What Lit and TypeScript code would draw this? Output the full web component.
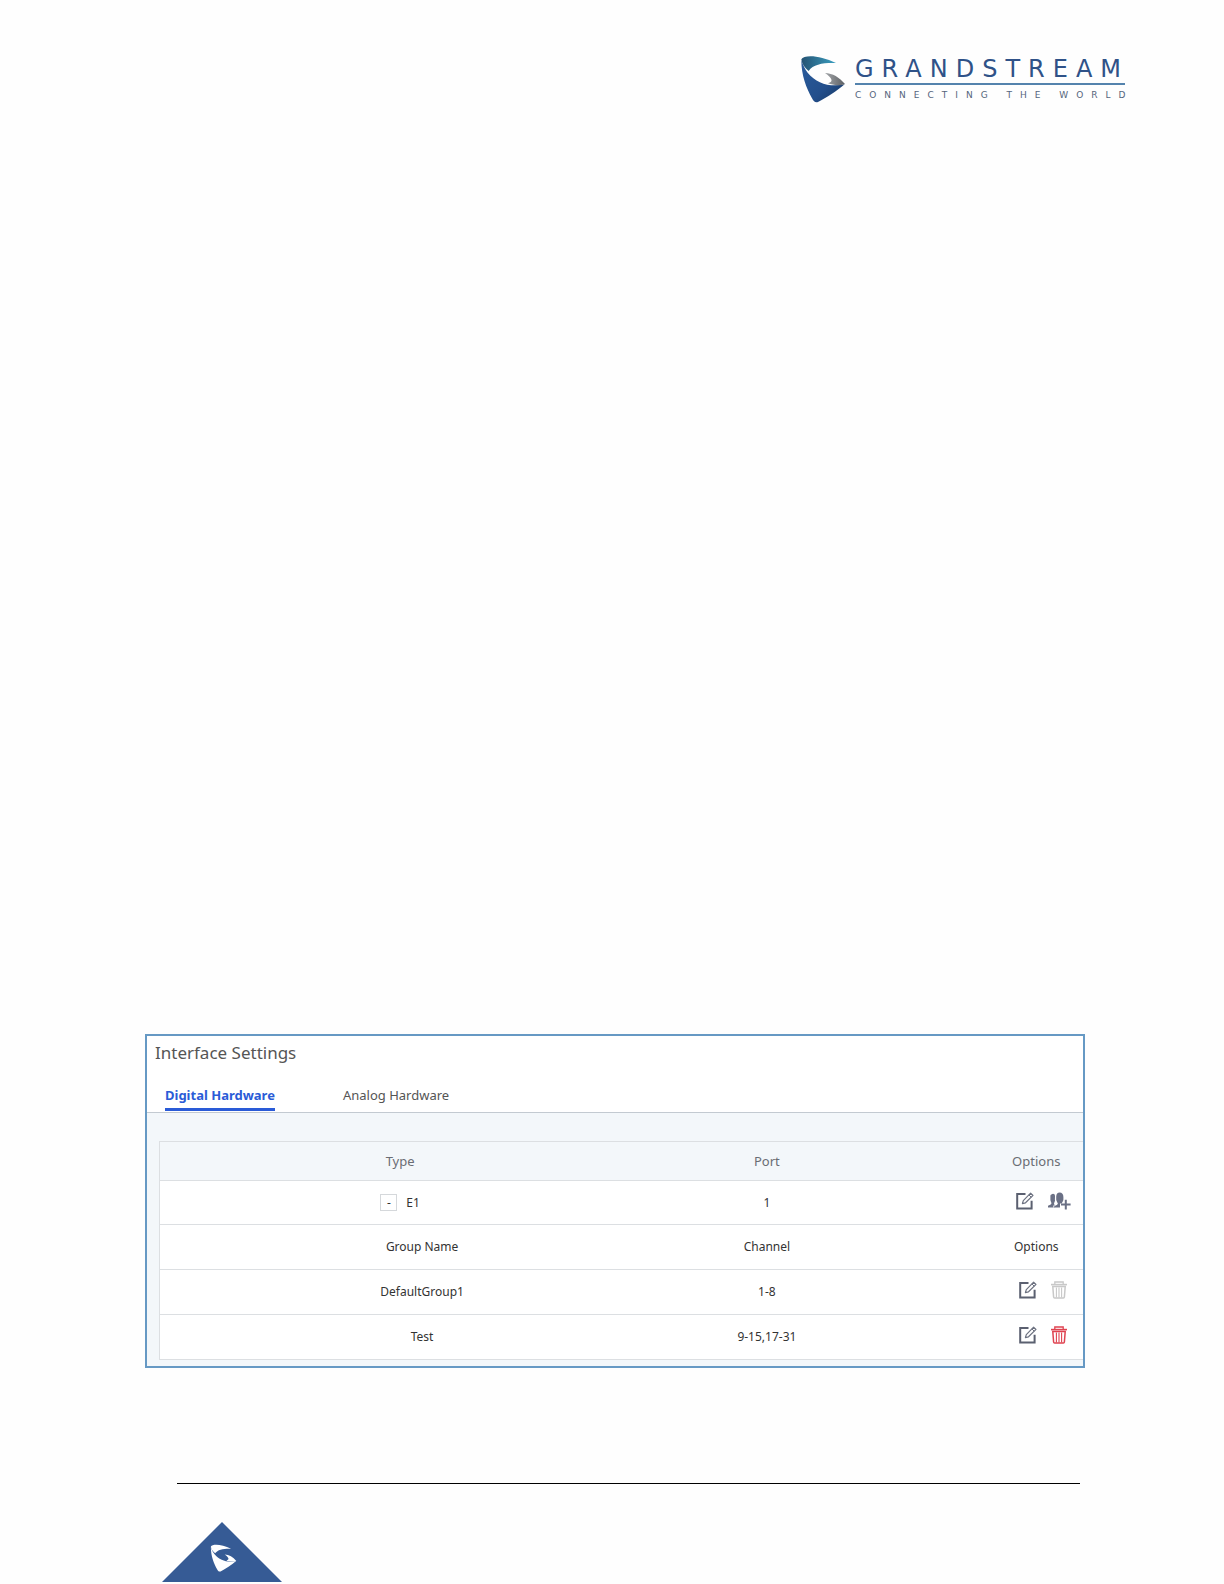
import { LitElement, html, css, svg } from "lit";
import { customElement, state } from "lit/decorators.js";

const shield = (top: string, body: string, tip: string) => svg`
  <path fill=${body} d="M34 43 C39 60 45 70 53 81 C80 114 120 125 164 116 C140 136 110 156 84 169 C76 172 71 167 66 158 C49 126 34 90 34 43Z"/>
  <path fill=${top} d="M34 41 C42 26 90 28 138 52 C100 51 70 55 56 76 C44 66 36 56 34 41Z"/>
  <path fill=${tip} d="M105 82 C128 83 148 95 165 115 C150 121 128 119 114 113 C132 108 126 97 105 82Z"/>`;

const editIcon = html`<svg class="icon" viewBox="0 0 18 18" width="18" height="18" aria-hidden="true">
  <path d="M9.5 2H1.2V16.6H15.6V8.8" fill="none" stroke="#5b6070" stroke-width="2"/>
  <path d="M6.4 11.6L7.3 8.6L14.6 1.2L17 3.4L9.5 10.8Z" fill="#fff" stroke="#6d7281" stroke-width="1.2" stroke-linejoin="round"/>
  <path d="M12.9 2.9L15.2 5.2" stroke="#6d7281" stroke-width="1"/>
</svg>`;

const groupIcon = html`<svg class="icon" viewBox="0 0 23 18" width="23" height="18" aria-hidden="true">
  <path fill="#6a7085" d="M3.4 2.4C5 1.2 7 1.8 7 4V8.5C6.8 10 6 10.8 6 12L7 13V15.4H0V13.8C1.5 13 3.2 13 3.4 11.6C3.6 10.6 2.6 9.6 2.4 8V4C2.4 3 2.8 2.6 3.4 2.4Z"/>
  <path fill="#6a7085" d="M8.2 4.6C8.3 2 9.6 .6 11.6 .6C14 .6 15.4 2.2 15.4 5V7.4C15.4 9.2 13.8 10.2 13.8 11.6H12V15.4H6.4V14C8.2 13.2 9.8 13 9.8 11.6C9.8 10.4 8.2 9.4 8.2 7.4Z"/>
  <path d="M7.6 2L7.4 8L8.8 11.4L5.8 13.6V15.6" stroke="#fff" stroke-width=".9" fill="none"/>
  <path d="M17.8 7.8V17.4M13 12.6H22.6" stroke="#6a7085" stroke-width="2"/>
</svg>`;

const trashIcon = html`<svg class="icon" viewBox="0 0 16 18" width="16" height="18" aria-hidden="true">
  <g fill="none" stroke="currentColor">
    <path d="M0 3.6H16" stroke-width="1.6"/>
    <path d="M3.8 3V1H12.2V3" stroke-width="1.3"/>
    <path d="M1.8 5.6L2.6 16C2.7 16.8 3 17 3.6 17H12.4C13 17 13.3 16.8 13.4 16L14.2 5.6Z" stroke-width="1.5"/>
    <path d="M5.4 6.4V16.4M8 6.4V16.4M10.6 6.4V16.4" stroke-width="1.1"/>
  </g>
</svg>`;

interface Group { name: string; channel: string; removable: boolean }

@customElement("app-root")
export class AppRoot extends LitElement {
  @state() private tab = "Digital Hardware";
  @state() private open = true;

  private groups: Group[] = [
    { name: "DefaultGroup1", channel: "1-8", removable: false },
    { name: "Test", channel: "9-15,17-31", removable: true },
  ];

  static styles = css`
    :host {
      display: flex;
      flex-direction: column;
      min-height: 100vh;
      box-sizing: border-box;
      background: #fefefe;
      font-family: "Noto Sans", "Open Sans", sans-serif;
      color: #333;
    }
    button {
      font: inherit;
      color: inherit;
      background: none;
      border: 0;
      padding: 0;
      cursor: pointer;
    }
    .header {
      display: flex;
      justify-content: flex-end;
      gap: 9px;
      padding: 55px 99px 0 0;
    }
    .brand { display: flex; flex-direction: column; font-family: "DejaVu Sans", sans-serif; width: 270px; white-space: nowrap; }
    .name { font-size: 24px; line-height: 28px; letter-spacing: 8px; color: #2f5288; border-bottom: 2px solid #5483ad; }
    .tagline { font-size: 9px; line-height: 20px; letter-spacing: 8px; color: #55657c; }
    .main {
      flex: 1;
      display: flex;
      flex-direction: column;
      justify-content: flex-end;
      padding: 0 139px 0 145px;
    }
    .panel { border: 2px solid #6699c4; background: #fff; }
    .title { margin: 0; padding: 4px 8px 0; font-size: 17px; line-height: 26px; font-weight: 400; color: #555; }
    .tabs { display: flex; gap: 68px; padding: 16px 18px 1px; border-bottom: 1px solid #c3cad1; }
    .tab { font-size: 13px; line-height: 26px; border-bottom: 3px solid transparent; color: #555; }
    .tab.active { font-weight: 700; color: #2a5bd7; border-color: #2a5bd7; }
    .body { background: #f3f7fa; padding: 28px 0 6px 12px; }
    .grid {
      width: 100%;
      table-layout: fixed;
      border-collapse: collapse;
      background: #fff;
      border: 1px solid #dcdfe2;
      border-right: 0;
      font-size: 12px;
      line-height: 16px;
    }
    .type { width: 52%; }
    .port { width: 27%; }
    th, td { padding: 0; height: 43px; text-align: center; font-weight: 400; border-bottom: 1px solid #dcdfe2; }
    .head th { height: 38px; font-size: 13px; color: #6a6d74; background: #f3f7fa; }
    .sub th, .sub td { height: 44px; }
    .sub .first { padding-left: 44px; }
    .grid .mid { padding-left: 2px; }
    .grid .last { padding-left: 98px; }
    .actions { display: flex; justify-content: center; align-items: center; gap: 14px; padding: 0 0 4px 14px; }
    .type-cell { display: flex; justify-content: center; align-items: center; gap: 9px; }
    .toggle { width: 17px; height: 17px; line-height: 15px; border: 1px solid #d5d8db; }
    .act { display: flex; color: #df4350; }
    .act:disabled { color: #c8c8c8; }
    .icon { display: block; }
    .footer { height: 216px; padding: 0 144px 0 162px; box-sizing: border-box; }
    .rule { height: 116px; margin: 0 0 38px 15px; border: 0; border-bottom: 1px solid #000; box-sizing: border-box; }
    .badge { display: block; }
  `;

  private renderTab(label: string) {
    return html`<button class="tab ${this.tab === label ? "active" : ""}" role="tab"
      aria-selected=${this.tab === label} @click=${() => (this.tab = label)}>${label}</button>`;
  }

  render() {
    return html`
      <header class="header">
        <svg viewBox="30 28 138 144" width="46" height="48" role="img" aria-label="Grandstream">
          <defs>
            <linearGradient id="top"><stop offset="0" stop-color="#245273"/><stop offset="1" stop-color="#3b9fc0"/></linearGradient>
            <linearGradient id="body" x2="1" y2="1"><stop offset="0" stop-color="#2a5c9c"/><stop offset=".6" stop-color="#234f8c"/><stop offset="1" stop-color="#16355f"/></linearGradient>
            <linearGradient id="tip"><stop offset="0" stop-color="#a2a5a8"/><stop offset="1" stop-color="#5c5f63"/></linearGradient>
          </defs>
          ${shield("url(#top)", "url(#body)", "url(#tip)")}
        </svg>
        <div class="brand">
          <span class="name">GRANDSTREAM</span>
          <span class="tagline">CONNECTING THE WORLD</span>
        </div>
      </header>
      <main class="main">
        <section class="panel">
          <h1 class="title">Interface Settings</h1>
          <div class="tabs" role="tablist">
            ${this.renderTab("Digital Hardware")}${this.renderTab("Analog Hardware")}
          </div>
          <div class="body">
            <table class="grid">
              <thead>
                <tr class="head"><th class="type">Type</th><th class="port mid">Port</th><th class="last">Options</th></tr>
              </thead>
              <tbody>
                <tr>
                  <td><div class="type-cell">
                    <button class="toggle" aria-label="Toggle groups" aria-expanded=${this.open}
                      @click=${() => (this.open = !this.open)}>${this.open ? "-" : "+"}</button>E1
                  </div></td>
                  <td class="mid">1</td>
                  <td class="last"><div class="actions">
                    <button class="act" aria-label="Edit">${editIcon}</button>
                    <button class="act" aria-label="Add group">${groupIcon}</button>
                  </div></td>
                </tr>
                ${this.open ? html`
                  <tr class="sub"><th class="first">Group Name</th><th class="mid">Channel</th><th class="last">Options</th></tr>
                  ${this.groups.map((g) => html`<tr class="sub">
                    <td class="first">${g.name}</td>
                    <td class="mid">${g.channel}</td>
                    <td class="last"><div class="actions">
                      <button class="act" aria-label="Edit">${editIcon}</button>
                      <button class="act" aria-label="Delete" ?disabled=${!g.removable}>${trashIcon}</button>
                    </div></td>
                  </tr>`)}` : ""}
              </tbody>
            </table>
          </div>
        </section>
      </main>
      <footer class="footer">
        <hr class="rule" />
        <svg class="badge" viewBox="0 0 120 60" width="120" height="60" role="img" aria-label="Grandstream">
          <path fill="#365b95" d="M60 0L120 60H0Z"/>
          <svg x="48" y="22" width="27" height="28" viewBox="30 28 138 144">${shield("#fff", "#fff", "#fff")}</svg>
        </svg>
      </footer>`;
  }
}
